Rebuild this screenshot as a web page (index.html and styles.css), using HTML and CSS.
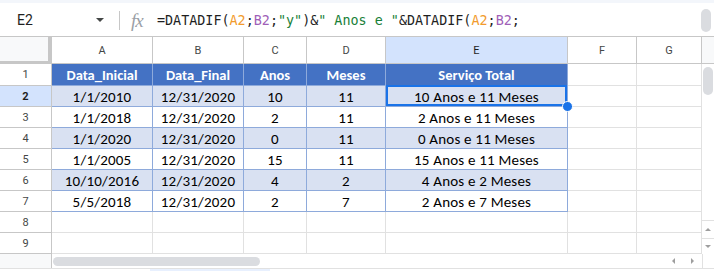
FILE: index.html
```html
<!DOCTYPE html>
<html>
<head>
<meta charset="utf-8">
<link rel="stylesheet" href="styles.css">
</head>
<body>
<div class="app">
  <div class="topstrip"></div>
  <div class="fbar">
    <div class="namebox"><span class="nb-text">E2</span><span class="caret"></span></div>
    <div class="sep"></div>
    <div class="fx">fx</div>
    <div class="formula">=DATADIF(<span class="ref-a">A2</span>;<span class="ref-b">B2</span>;<span class="str">"y"</span>)&amp;<span class="str">" Anos e "</span>&amp;DATADIF(<span class="ref-a">A2</span>;<span class="ref-b">B2</span>;</div>
    <div class="fscroll"></div>
  </div>
  <div class="sheet">
    <!-- column headers -->
    <div class="corner"></div>
    <div class="ch">A</div>
    <div class="ch">B</div>
    <div class="ch">C</div>
    <div class="ch">D</div>
    <div class="ch ch-sel">E</div>
    <div class="ch">F</div>
    <div class="ch">G</div>
    <div class="vs-head"></div>

    <!-- row 1 -->
    <div class="rh">1</div>
    <div class="th">Data_Inicial</div>
    <div class="th">Data_Final</div>
    <div class="th">Anos</div>
    <div class="th">Meses</div>
    <div class="th th-last">Serviço Total</div>
    <div class="ec"></div>
    <div class="ec"></div>
    <div class="vscroll">
      <div class="vthumb"></div>
      <div class="vspacer"></div>
      <div class="vbtn"><span class="tri-up"></span></div>
      <div class="vbtn vbtn-last"><span class="tri-down"></span></div>
    </div>

    <!-- row 2 -->
    <div class="rh rh-sel">2</div>
    <div class="td alt">1/1/2010</div>
    <div class="td alt">12/31/2020</div>
    <div class="td alt">10</div>
    <div class="td alt">11</div>
    <div class="td alt td-last selected">10 Anos e 11 Meses<span class="sel-box"></span><span class="handle"></span></div>
    <div class="ec"></div>
    <div class="ec"></div>

    <!-- row 3 -->
    <div class="rh">3</div>
    <div class="td">1/1/2018</div>
    <div class="td">12/31/2020</div>
    <div class="td">2</div>
    <div class="td">11</div>
    <div class="td td-last">2 Anos e 11 Meses</div>
    <div class="ec"></div>
    <div class="ec"></div>

    <!-- row 4 -->
    <div class="rh">4</div>
    <div class="td alt">1/1/2020</div>
    <div class="td alt">12/31/2020</div>
    <div class="td alt">0</div>
    <div class="td alt">11</div>
    <div class="td alt td-last">0 Anos e 11 Meses</div>
    <div class="ec"></div>
    <div class="ec"></div>

    <!-- row 5 -->
    <div class="rh">5</div>
    <div class="td">1/1/2005</div>
    <div class="td">12/31/2020</div>
    <div class="td">15</div>
    <div class="td">11</div>
    <div class="td td-last">15 Anos e 11 Meses</div>
    <div class="ec"></div>
    <div class="ec"></div>

    <!-- row 6 -->
    <div class="rh">6</div>
    <div class="td alt">10/10/2016</div>
    <div class="td alt">12/31/2020</div>
    <div class="td alt">4</div>
    <div class="td alt">2</div>
    <div class="td alt td-last">4 Anos e 2 Meses</div>
    <div class="ec"></div>
    <div class="ec"></div>

    <!-- row 7 -->
    <div class="rh">7</div>
    <div class="td">5/5/2018</div>
    <div class="td">12/31/2020</div>
    <div class="td">2</div>
    <div class="td">7</div>
    <div class="td td-last">2 Anos e 7 Meses</div>
    <div class="ec"></div>
    <div class="ec"></div>

    <!-- row 8 -->
    <div class="rh">8</div>
    <div class="ec"></div>
    <div class="ec"></div>
    <div class="ec"></div>
    <div class="ec"></div>
    <div class="ec"></div>
    <div class="ec"></div>
    <div class="ec"></div>

    <!-- row 9 -->
    <div class="rh">9</div>
    <div class="ec"></div>
    <div class="ec"></div>
    <div class="ec"></div>
    <div class="ec"></div>
    <div class="ec"></div>
    <div class="ec"></div>
    <div class="ec"></div>
  </div>
  <div class="hscroll">
    <div class="hs-left"></div>
    <div class="hthumb"></div>
    <div class="hspacer"></div>
    <div class="hbtn"><span class="tri-left"></span></div>
    <div class="hbtn"><span class="tri-right"></span></div>
    <div class="hs-corner"></div>
  </div>
  <div class="tabs"><div class="tab-active"></div></div>
</div>
</body>
</html>
```
FILE: styles.css
```css
* { box-sizing: border-box; }
html, body { margin: 0; padding: 0; background: #ffffff; }

.app {
  width: 714px;
  height: 271px;
  overflow: hidden;
  font-family: Roboto, "Liberation Sans", Arial, sans-serif;
  color: #1f1f1f;
}

.topstrip { height: 3px; background: #f3f6fb; }

.fbar {
  height: 34px;
  display: flex;
  align-items: center;
  border-bottom: 1px solid #c7c7c7;
}

.namebox {
  width: 105px;
  padding-left: 17px;
  padding-right: 1px;
  display: flex;
  align-items: center;
}
.nb-text { font-size: 14px; color: #1f1f1f; }
.caret {
  margin-left: auto;
  width: 0; height: 0;
  border-left: 4px solid transparent;
  border-right: 4px solid transparent;
  border-top: 4px solid #444746;
}

.sep {
  width: 1px;
  height: 19px;
  margin-left: 14px;
  margin-top: 2px;
  background: #c7c7c7;
}

.fx {
  margin-left: 11px;
  width: 17px;
  font-family: "Liberation Serif", "DejaVu Serif", serif;
  font-style: italic;
  font-size: 19px;
  color: #9aa0a6;
  line-height: 1;
  letter-spacing: -1px;
  margin-top: 1px;
}

.formula {
  margin-left: 9px;
  font-family: "DejaVu Sans Mono", "Liberation Mono", monospace;
  font-size: 13.4px;
  color: #1f1f1f;
  white-space: nowrap;
  margin-top: 1px;
}
.ref-a { color: #f29b2e; }
.ref-b { color: #9f5fb8; }
.str { color: #188038; }

.fscroll {
  margin-left: auto;
  margin-right: 3px;
  width: 10px;
  height: 23px;
  border-radius: 5px;
  background: #dadce0;
  align-self: flex-start;
  margin-top: 6px;
}

/* ---------- sheet grid ---------- */
.sheet {
  display: grid;
  grid-template-columns: 52px 101px 91px 63px 79px 182px 69px 65px 12px;
  grid-template-rows: 27px 22px repeat(8, 21px);
}

.corner {
  background: #f8f9fa;
  border-right: 4px solid #c7c7c7;
  border-bottom: 3px solid #c7c7c7;
}

.ch {
  display: flex;
  align-items: center;
  justify-content: center;
  font-size: 11px;
  color: #444746;
  background: #ffffff;
  border-right: 1px solid #c7c7c7;
  border-bottom: 1px solid #c7c7c7;
  padding-top: 1px;
}
.ch-sel { background: #d3e3fd; color: #1f1f1f; }

.vs-head {
  background: #f8f9fa;
  border-bottom: 1px solid #c7c7c7;
}

.rh {
  display: flex;
  align-items: center;
  justify-content: center;
  font-size: 11px;
  color: #444746;
  background: #ffffff;
  border-right: 1px solid #c7c7c7;
  border-bottom: 1px solid #c7c7c7;
}
.rh-sel { background: #d3e3fd; font-weight: bold; color: #1f1f1f; }

.th, .td {
  display: flex;
  align-items: center;
  justify-content: center;
  font-family: Carlito, Calibri, Lato, sans-serif;
  white-space: nowrap;
  border-right: 1px solid #8eaadb;
  border-bottom: 1px solid #8eaadb;
  padding-top: 2px;
}
.th {
  background: #4472c4;
  color: #ffffff;
  font-weight: bold;
  font-size: 14.5px;
  padding-top: 1px;
}
.td {
  color: #000000;
  background: #ffffff;
  font-size: 15px;
  letter-spacing: 0.2px;
}
.td.alt { background: #d9e1f2; }

.ec {
  border-right: 1px solid #e1e1e1;
  border-bottom: 1px solid #e1e1e1;
}

.selected { position: relative; }
.sel-box {
  position: absolute;
  top: -1px; left: 0; right: 0; bottom: 0;
  border: 2px solid #1a73e8;
}
.handle {
  position: absolute;
  left: 176px;
  top: 15px;
  width: 11px;
  height: 11px;
  border-radius: 50%;
  background: #1a73e8;
  border: 1px solid #ffffff;
}

/* vertical scrollbar */
.vscroll {
  grid-column: 9;
  grid-row: 2 / span 9;
  display: flex;
  flex-direction: column;
  background: #ffffff;
}
.vthumb {
  margin-top: 3px;
  margin-left: 1px;
  width: 10px;
  height: 28px;
  border-radius: 5px;
  background: #dadce0;
}
.vspacer { flex: 1; }
.vbtn {
  height: 18px;
  border-top: 1px solid #e1e1e1;
  display: flex;
  align-items: center;
  justify-content: center;
}
.vbtn-last { height: 16px; }
.tri-up {
  width: 0; height: 0;
  border-left: 3px solid transparent;
  border-right: 3px solid transparent;
  border-bottom: 3px solid #9e9e9e;
}
.tri-down {
  width: 0; height: 0;
  border-left: 3px solid transparent;
  border-right: 3px solid transparent;
  border-top: 3px solid #9e9e9e;
}

/* horizontal scrollbar */
.hscroll {
  height: 15px;
  display: flex;
  align-items: center;
  border-bottom: 1px solid #e1e1e1;
}
.hs-left {
  width: 52px;
  height: 14px;
  align-self: flex-start;
  background: #f8f9fa;
  border-right: 1px solid #c7c7c7;
}
.hthumb {
  margin-left: 1px;
  width: 207px;
  height: 9px;
  border-radius: 5px;
  background: #dadce0;
}
.hspacer { flex: 1; }
.hbtn {
  width: 19px;
  height: 14px;
  display: flex;
  align-items: center;
  justify-content: center;
}
.tri-left {
  width: 0; height: 0;
  border-top: 3px solid transparent;
  border-bottom: 3px solid transparent;
  border-right: 3px solid #9e9e9e;
}
.tri-right {
  width: 0; height: 0;
  border-top: 3px solid transparent;
  border-bottom: 3px solid transparent;
  border-left: 3px solid #9e9e9e;
}
.hs-corner {
  width: 12px;
  height: 14px;
  align-self: flex-start;
  border-left: 1px solid #e1e1e1;
}

.tabs {
  height: 2px;
  display: flex;
}
.tab-active {
  margin-left: 150px;
  width: 120px;
  height: 2px;
  background: #e8f0fe;
}
```
